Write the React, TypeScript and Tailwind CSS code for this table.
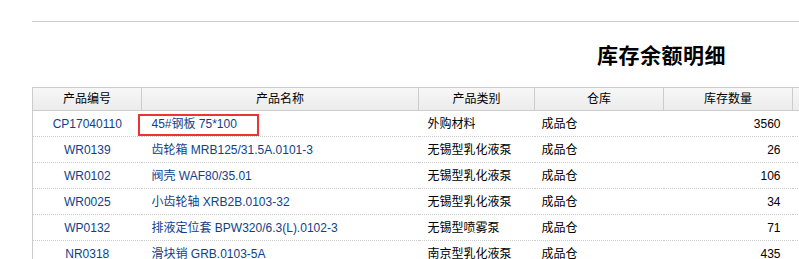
import React from 'react';

interface StockRow {
  code: string;
  name: string;
  category: string;
  warehouse: string;
  qty: number;
  marked?: boolean;
}

const rows: StockRow[] = [
  { code: 'CP17040110', name: '45#钢板 75*100', category: '外购材料', warehouse: '成品仓', qty: 3560, marked: true },
  { code: 'WR0139', name: '齿轮箱 MRB125/31.5A.0101-3', category: '无锡型乳化液泵', warehouse: '成品仓', qty: 26 },
  { code: 'WR0102', name: '阀壳 WAF80/35.01', category: '无锡型乳化液泵', warehouse: '成品仓', qty: 106 },
  { code: 'WR0025', name: '小齿轮轴 XRB2B.0103-32', category: '无锡型乳化液泵', warehouse: '成品仓', qty: 34 },
  { code: 'WP0132', name: '排液定位套 BPW320/6.3(L).0102-3', category: '无锡型喷雾泵', warehouse: '成品仓', qty: 71 },
  { code: 'NR0318', name: '滑块销 GRB.0103-5A', category: '南京型乳化液泵', warehouse: '成品仓', qty: 435 },
];

export default function App() {
  return (
    <div
      className="w-[799px] h-[259px] overflow-hidden bg-white text-[12px] text-black"
      style={{ fontFamily: '"Liberation Sans", "Noto Sans CJK SC", sans-serif' }}
    >
      <div className="pt-[21px] pl-[32px]">
        <div className="border-t border-[#cccccc] h-[66px] flex items-center pl-[565px] pt-[1px]">
          <h1 className="text-[21px] font-bold tracking-[0.5px] leading-none whitespace-nowrap">库存余额明细</h1>
        </div>
        <table className="border-collapse table-fixed w-[900px] border-l border-[#cccccc]">
          <colgroup>
            <col className="w-[109px]" />
            <col className="w-[277px]" />
            <col className="w-[116px]" />
            <col className="w-[129px]" />
            <col className="w-[129px]" />
            <col />
          </colgroup>
          <thead>
            <tr className="h-[23px] bg-gradient-to-b from-[#f7f7f7] to-[#ebebeb]">
              {['产品编号', '产品名称', '产品类别', '仓库', '库存数量', ''].map((h, i) => (
                <th
                  key={i}
                  className="font-normal text-center border-t border-b border-r border-[#cccccc] p-0"
                >
                  {h}
                </th>
              ))}
            </tr>
          </thead>
          <tbody>
            {rows.map((r) => (
              <tr key={r.code} className="h-[26px] border-b border-dotted border-[#cccccc]">
                <td className="text-center text-[#0f3f8c] p-0">{r.code}</td>
                <td className="relative text-[#0f3f8c] pl-[10px] whitespace-nowrap">
                  {r.name}
                  {r.marked && (
                    <span className="absolute left-[-4px] top-[3px] w-[121px] h-[22px] border-2 border-[#ee3333]" />
                  )}
                </td>
                <td className="pl-[9px] whitespace-nowrap">{r.category}</td>
                <td className="pl-[7px] whitespace-nowrap">{r.warehouse}</td>
                <td className="text-right pr-[12px]">{r.qty}</td>
                <td />
              </tr>
            ))}
          </tbody>
        </table>
      </div>
    </div>
  );
}
